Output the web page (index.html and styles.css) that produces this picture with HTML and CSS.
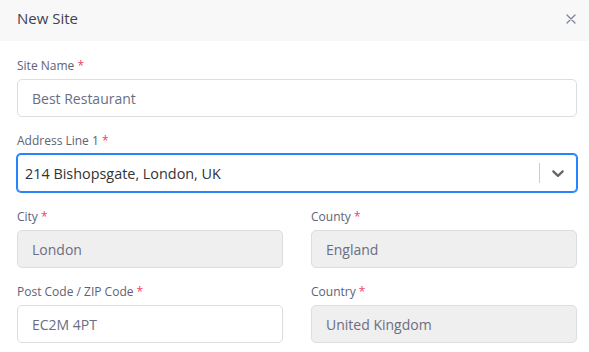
FILE: index.html
```html
<!DOCTYPE html>
<html>
<head>
<meta charset="utf-8">
<link rel="stylesheet" href="styles.css">
</head>
<body>
<div class="modal">
  <div class="modal-header">
    <span class="title">New Site</span>
    <span class="close">
      <svg width="10" height="10" viewBox="0 0 10 10"><path d="M1 1L9 9M9 1L1 9" stroke="#7e8299" stroke-width="1.3" stroke-linecap="round"/></svg>
    </span>
  </div>
  <div class="modal-body">
    <div class="group">
      <label class="label">Site Name <span class="req">*</span></label>
      <div class="input">Best Restaurant</div>
    </div>
    <div class="group group-select">
      <label class="label">Address Line 1 <span class="req">*</span></label>
      <div class="select">
        <div class="select-value">214 Bishopsgate, London, UK</div>
        <span class="sep"></span>
        <span class="indicator">
          <svg width="20" height="20" viewBox="0 0 20 20"><path fill="#666" d="M4.516 7.548c0.436-0.446 1.043-0.481 1.576 0l3.908 3.747 3.908-3.747c0.533-0.481 1.141-0.446 1.574 0 0.436 0.445 0.408 1.197 0 1.615-0.406 0.418-4.695 4.502-4.695 4.502-0.217 0.223-0.502 0.335-0.787 0.335s-0.57-0.112-0.789-0.335c0 0-4.287-4.084-4.695-4.502s-0.436-1.170 0-1.615z"/></svg>
        </span>
      </div>
    </div>
    <div class="row">
      <div class="group">
        <label class="label">City <span class="req">*</span></label>
        <div class="input disabled">London</div>
      </div>
      <div class="group">
        <label class="label">County <span class="req">*</span></label>
        <div class="input disabled">England</div>
      </div>
    </div>
    <div class="row">
      <div class="group">
        <label class="label">Post Code / ZIP Code <span class="req">*</span></label>
        <div class="input">EC2M 4PT</div>
      </div>
      <div class="group">
        <label class="label">Country <span class="req">*</span></label>
        <div class="input disabled">United Kingdom</div>
      </div>
    </div>
  </div>
</div>
</body>
</html>
```

FILE: styles.css
```css
* { box-sizing: border-box; }
html, body { margin: 0; padding: 0; background: #fff; }
body { font-family: "Open Sans", "Noto Sans", sans-serif; color: #5e6278; }
.modal { width: 589px; }
.modal-header {
  height: 41px;
  background: #f8f8f8;
  display: flex;
  align-items: center;
  justify-content: space-between;
  padding: 0 13px 0 17px;
}
.title { font-size: 15px; color: #3f4254; line-height: 20px; padding-bottom: 5px; }
.close { display: flex; width: 10px; height: 10px; margin-bottom: 4px; }
.modal-body { padding: 16px 12px 0 17px; display: flex; flex-direction: column; gap: 15px; }
.group { display: flex; flex-direction: column; gap: 4px; }
.group-select { margin-bottom: 1px; }
.row { display: grid; grid-template-columns: 266px 266px; column-gap: 28px; }
.label { font-size: 12px; line-height: 18px; color: #5e6278; }
.req { color: #f1416c; }
.input {
  height: 38px;
  border: 1px solid #dcdce3;
  border-radius: 5px;
  padding: 0 14px;
  display: flex;
  align-items: center;
  font-size: 14px;
  color: #6a6e82;
  background: #fff;
}
.input.disabled { background: #efefef; }
.select {
  height: 38px;
  border: 1px solid #2684ff;
  box-shadow: 0 0 0 1px #2684ff;
  border-radius: 4px;
  display: flex;
  align-items: center;
  background: #fff;
}
.select-value { flex: 1; padding-left: 7px; font-size: 14.4px; color: #333; }
.sep { width: 1px; height: 20px; background: #ccc; }
.indicator { display: flex; padding: 8px; }
```
